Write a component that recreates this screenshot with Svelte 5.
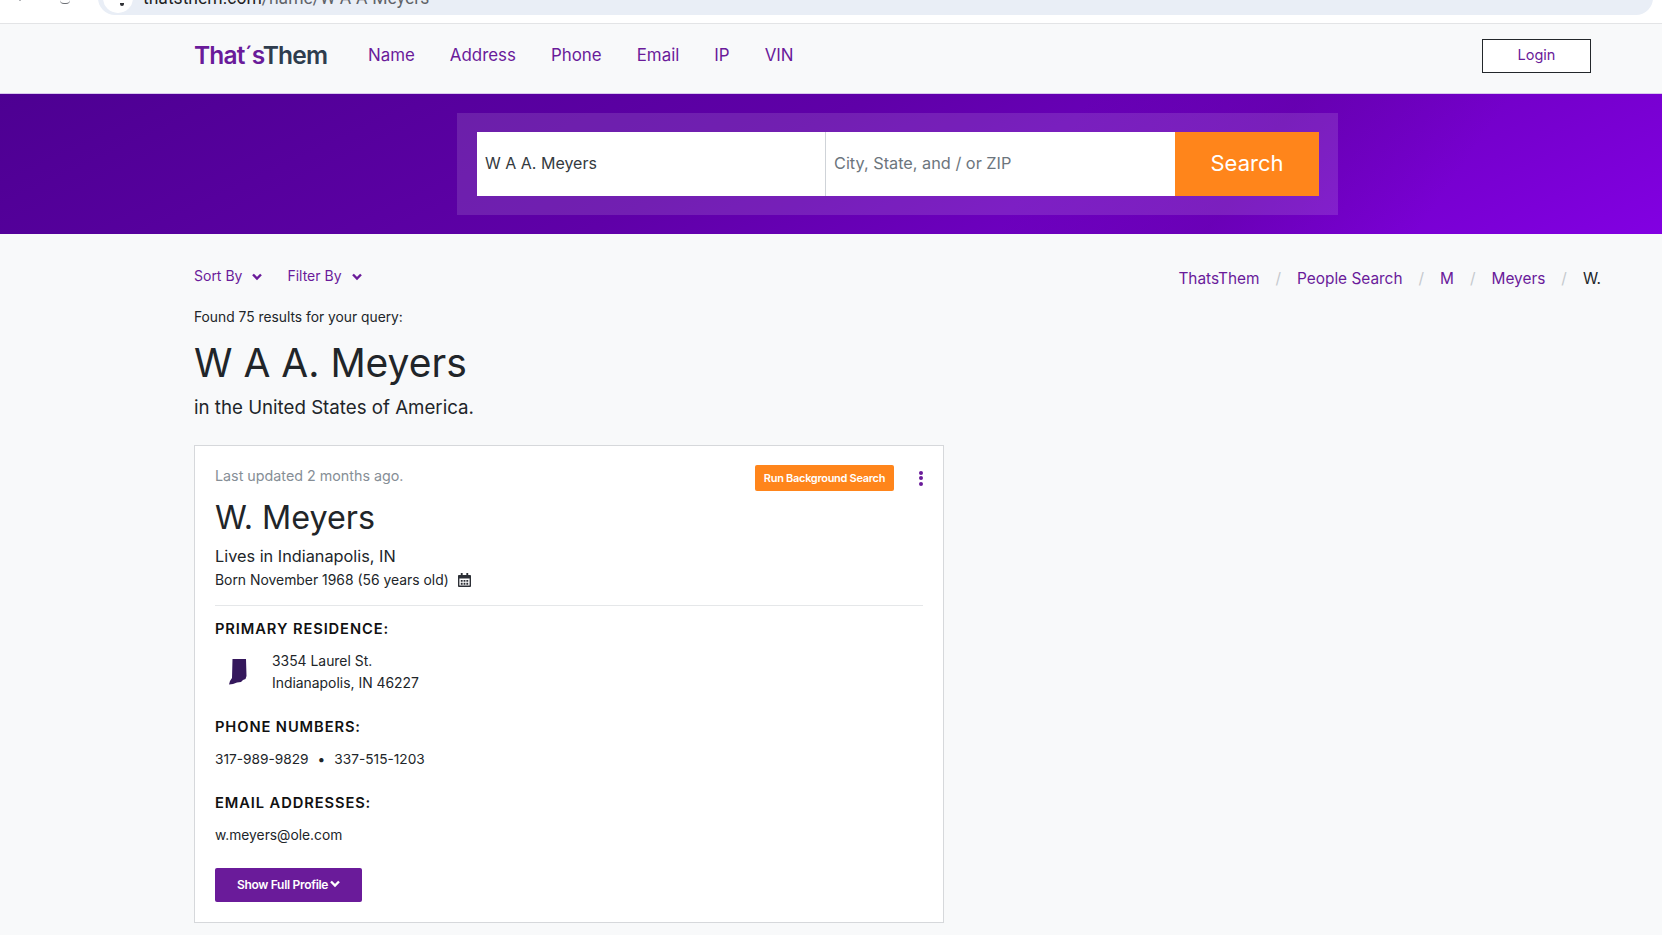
<script lang="ts">
  const navLinks: string[] = ["Name", "Address", "Phone", "Email", "IP", "VIN"];
  const crumbs: string[] = ["ThatsThem", "People Search", "M", "Meyers"];
</script>

<div class="browser">
  <span class="back"></span>
  <span class="reload"></span>
  <div class="address">
    <span class="site_icon"><i></i></span>
    <span class="url"><b>thatsthem.com</b>/name/W-A-A-Meyers</span>
  </div>
</div>

<header class="topbar">
  <div class="logo"><span class="purple">That<i>´</i>s</span>Them</div>
  <nav class="nav">
    {#each navLinks as link}
      <a href="#top">{link}</a>
    {/each}
  </nav>
  <button class="login">Login</button>
</header>

<section class="hero">
  <form class="search_box">
    <input class="field" value="W A A. Meyers" />
    <input class="field second" placeholder="City, State, and / or ZIP" />
    <button class="search_button" type="button">Search</button>
  </form>
</section>

<main class="content">
  <div class="tools">
    <div class="filters">
      <span class="filter">Sort By
        <svg viewBox="0 0 10 8" width="10" height="8"><path d="M1 1.500 L5 5.500 L9 1.500" fill="none" stroke="currentColor" stroke-width="2.400" /></svg>
      </span>
      <span class="filter">Filter By
        <svg viewBox="0 0 10 8" width="10" height="8"><path d="M1 1.500 L5 5.500 L9 1.500" fill="none" stroke="currentColor" stroke-width="2.400" /></svg>
      </span>
    </div>
    <div class="crumbs">
      {#each crumbs as crumb}
        <a href="#top">{crumb}</a>
        <span class="slash">/</span>
      {/each}
      <span class="current">W.</span>
    </div>
  </div>

  <p class="found">Found 75 results for your query:</p>
  <h1>W A A. Meyers</h1>
  <p class="region">in the United States of America.</p>

  <article class="card">
    <div class="card_top">
      <span class="updated">Last updated 2 months ago.</span>
      <div class="card_actions">
        <button class="background">Run Background Search</button>
        <span class="dots"><i></i><i></i><i></i></span>
      </div>
    </div>
    <h2>W. Meyers</h2>
    <p class="lives">Lives in Indianapolis, IN</p>
    <p class="born">Born November 1968 (56 years old)
      <svg viewBox="0 0 14 15" width="13" height="14">
        <path d="M3 0h2v2h4V0h2v2h2a1 1 0 0 1 1 1v11a1 1 0 0 1-1 1H1a1 1 0 0 1-1-1V3a1 1 0 0 1 1-1h2zM1.500 6v7.500h11V6z" fill="#2c2f36" fill-rule="evenodd" />
        <path d="M3 7.500h2v2H3zM6 7.500h2v2H6zM9 7.500h2v2H9zM3 10.500h2v2H3zM6 10.500h2v2H6zM9 10.500h2v2H9z" fill="#2c2f36" />
      </svg>
    </p>
    <hr />
    <h3>Primary Residence:</h3>
    <div class="residence">
      <svg viewBox="0 0 20 28" width="20" height="28">
        <path d="M4.500 1 L18 1 L18.500 18 L17.500 21 L15 22 L13 24 L9 24.500 L5 26 L1 26.500 L2 23 L4 20 Z" fill="#35185c" />
      </svg>
      <address>3354 Laurel St.<br />Indianapolis, IN 46227</address>
    </div>
    <h3 class="phones_head">Phone Numbers:</h3>
    <p class="phones">317-989-9829<span class="dot">•</span>337-515-1203</p>
    <h3 class="email_head">Email Addresses:</h3>
    <p class="email">w.meyers@ole.com</p>
    <button class="profile">Show Full Profile
      <svg viewBox="0 0 10 8" width="10" height="8"><path d="M1 1.500 L5 5.500 L9 1.500" fill="none" stroke="currentColor" stroke-width="2.400" /></svg>
    </button>
  </article>
</main>

<style>
  :global(body) {
    margin: 0;
    background: #f8f9fa;
    font-family: "Inter", "Liberation Sans", sans-serif;
    color: #212529;
    height: 935px;
    overflow: hidden;
  }

  .browser {
    height: 23px;
    background: #fff;
    border-bottom: 1px solid #e3e4e6;
    position: relative;
    overflow: hidden;
  }

  .back {
    position: absolute;
    left: 19px;
    top: 0;
    width: 2px;
    height: 1px;
    background: #b5b7bb;
  }

  .reload {
    position: absolute;
    left: 60px;
    top: 0;
    width: 10px;
    height: 3px;
    border-radius: 0 0 6px 6px;
    border-bottom: 1px solid #6c6f75;
  }

  .address {
    position: absolute;
    left: 98px;
    right: 9px;
    top: -20px;
    height: 35px;
    background: #e9eef6;
    border-radius: 17px;
    display: flex;
    align-items: center;
    font-size: 17.500px;
    color: #5f6368;
  }

  .site_icon {
    width: 30px;
    height: 30px;
    margin-left: 5px;
    background: #fff;
    border-radius: 50%;
    position: relative;
  }

  .site_icon i {
    position: absolute;
    left: 17px;
    top: 20px;
    width: 4px;
    height: 3px;
    border-radius: 0 0 2px 2px;
    background: #303236;
  }

  .url {
    margin-left: 10px;
    font-family: "Roboto", sans-serif;
  }

  .url b {
    font-weight: 400;
    color: #1f1f1f;
  }

  .topbar {
    height: 69px;
    box-sizing: border-box;
    display: flex;
    align-items: center;
    padding: 0 71px 6px 194px;
  }

  .logo {
    font-size: 24.500px;
    font-weight: 600;
    color: #2f3d4e;
    width: 133px;
    margin-bottom: 1px;
    letter-spacing: -0.8px;
    white-space: nowrap;
  }

  .logo i {
    font-style: normal;
    font-weight: 400;
  }

  .purple {
    color: #6a1b9a;
  }

  .nav {
    display: flex;
    gap: 35px;
    margin-left: 41px;
    margin-bottom: 1px;
    flex: 1;
  }

  .nav a {
    color: #6a1b9a;
    text-decoration: none;
    font-size: 16.900px;
  }

  .login {
    width: 109px;
    height: 34px;
    background: #fff;
    border: 1px solid #23272b;
    color: #6a1b9a;
    font: inherit;
    font-size: 14.500px;
    padding: 0 0 2px;
  }

  .hero {
    height: 141px;
    box-sizing: border-box;
    padding: 19px 0 0 457px;
    background:
      linear-gradient(125deg, transparent 62%, rgba(90, 0, 150, 0.35) 74%, transparent 86%),
      linear-gradient(155deg, #4d0092 0%, #5f00a8 45%, #8200e2 100%);
    border-top: 1px solid #d9c8ee;
  }

  .search_box {
    width: 881px;
    height: 102px;
    box-sizing: border-box;
    padding: 19px 18px 19px 20px;
    background: rgba(255, 255, 255, 0.12);
    display: flex;
  }

  .field {
    width: 349px;
    height: 64px;
    box-sizing: border-box;
    border: 0;
    border-right: 1px solid #cfd3d8;
    background: #fff;
    padding: 0 8px 2px;
    font: inherit;
    font-size: 16px;
    color: #343a40;
    outline: none;
  }

  .field.second {
    width: 349px;
    border-right: 0;
    font-size: 16.300px;
  }

  .field::placeholder {
    color: #6c757d;
    opacity: 1;
  }

  .search_button {
    width: 144px;
    height: 64px;
    border: 0;
    background: #ff851b;
    color: #fff;
    font: inherit;
    font-size: 22px;
    padding: 0 0 3px;
  }

  .content {
    padding: 0 0 0 194px;
  }

  .tools {
    display: flex;
    justify-content: space-between;
    padding: 31px 61px 0 0;
    height: 28px;
  }

  .filters {
    display: flex;
    gap: 25px;
  }

  .filter {
    color: #6a1b9a;
    font-size: 14px;
    display: flex;
    align-items: center;
    gap: 10px;
    height: 20px;
  }

  .filter svg {
    margin-top: 3px;
  }

  .crumbs {
    display: flex;
    gap: 16px;
    font-size: 15.400px;
    height: 24px;
    padding-top: 1px;
    align-items: center;
  }

  .crumbs a {
    color: #6a1b9a;
    text-decoration: none;
  }

  .slash {
    color: #c5c9ce;
  }

  .found {
    margin: 14px 0 0;
    font-size: 13.800px;
    line-height: 20px;
  }

  h1 {
    margin: 11px 0 0;
    font-size: 39px;
    line-height: 50px;
    font-weight: 400;
    color: #212529;
  }

  .region {
    margin: 6px 0 0;
    font-size: 18.700px;
    line-height: 27px;
  }

  .card {
    width: 750px;
    height: 478px;
    box-sizing: border-box;
    margin-top: 24px;
    padding: 20px 20px 20px;
    background: #fff;
    border: 1px solid #d6d8db;
  }

  .card_top {
    display: flex;
    justify-content: space-between;
    align-items: flex-start;
    height: 26px;
  }

  .updated {
    color: #868e96;
    font-size: 14.300px;
    line-height: 20px;
  }

  .card_actions {
    display: flex;
    align-items: center;
    gap: 25px;
    margin-top: -1px;
  }

  .background {
    width: 139px;
    height: 26px;
    padding: 0;
    border: 0;
    border-radius: 2px;
    background: #ff851b;
    color: #fff;
    font: inherit;
    font-size: 11px;
    font-weight: 600;
    letter-spacing: -0.3px;
  }

  .dots {
    display: flex;
    flex-direction: column;
    gap: 1.500px;
    width: 4px;
  }

  .dots i {
    width: 4px;
    height: 4px;
    border-radius: 50%;
    background: #6a1b9a;
  }

  h2 {
    margin: 6px 0 0;
    font-size: 32.300px;
    line-height: 40px;
    font-weight: 400;
  }

  .lives {
    margin: 6px 0 0;
    font-size: 16.300px;
    line-height: 24px;
  }

  .born {
    margin: 1px 0 0;
    font-size: 13.900px;
    line-height: 22px;
    display: flex;
    align-items: center;
    gap: 9px;
  }

  hr {
    margin: 14px 0 0;
    border: 0;
    border-top: 1px solid #e5e7e9;
  }

  h3 {
    margin: 14px 0 0;
    font-size: 14.700px;
    line-height: 18px;
    font-weight: 600;
    letter-spacing: 0.9px;
    text-transform: uppercase;
    color: #111;
  }

  .residence {
    display: flex;
    align-items: center;
    margin-top: 12px;
  }

  .residence svg {
    margin-left: 13px;
    margin-right: 24px;
  }

  address {
    font-style: normal;
    font-size: 13.900px;
    line-height: 22px;
  }

  .phones_head {
    margin-top: 24px;
  }

  .phones,
  .email {
    margin: 13px 0 0;
    font-size: 13.700px;
    line-height: 20px;
  }

  .email {
    font-size: 13.800px;
  }

  .dot {
    margin: 0 9px;
  }

  .email_head {
    margin-top: 25px;
  }

  .profile {
    display: flex;
    align-items: center;
    justify-content: center;
    gap: 2px;
    width: 147px;
    height: 34px;
    margin-top: 23px;
    padding: 0 0 2px;
    border: 0;
    border-radius: 2px;
    background: #6a1b9a;
    color: #fff;
    font: inherit;
    font-size: 12px;
    font-weight: 600;
    letter-spacing: -0.3px;
  }
</style>
